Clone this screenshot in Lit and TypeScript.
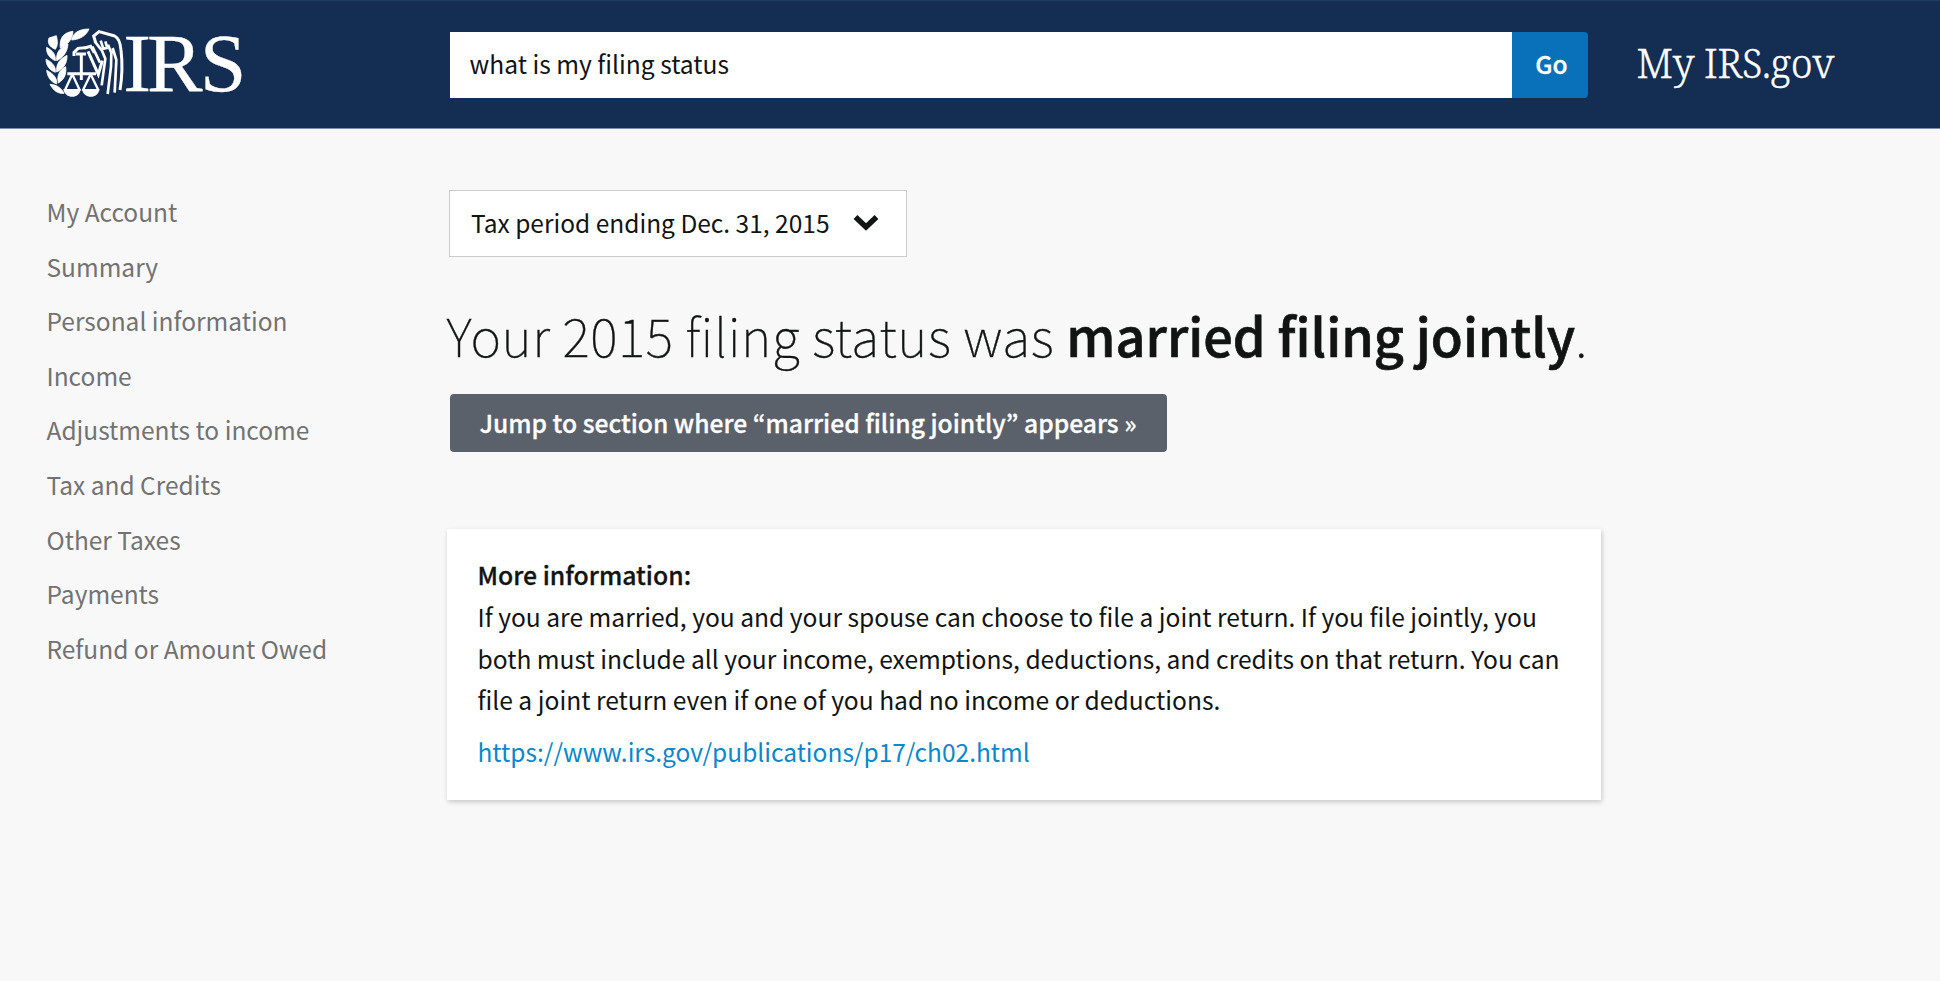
import { LitElement, html, css } from "lit";
import { customElement } from "lit/decorators.js";

const NAV = ["My Account", "Summary", "Personal information", "Income", "Adjustments to income", "Tax and Credits", "Other Taxes", "Payments", "Refund or Amount Owed"];

@customElement("irs-logo")
class IrsLogo extends LitElement {
  static styles = css`
    :host { display: block; }
    svg { display: block; width: 200px; height: 75px; overflow: visible; }
    .word { font-family: "Liberation Serif", serif; font-size: 250px; fill: #fff; stroke: #fff; stroke-width: 1; }
    .leaf { fill: #fff; }
    .laurel { fill: #fff; stroke: #fff; stroke-width: 2.5; }
    .line { fill: none; stroke: #fff; stroke-width: 9; stroke-linejoin: miter; }
    .feather { fill: none; stroke: #fff; stroke-width: 8; stroke-linejoin: bevel; }
    .thin { fill: none; stroke: #fff; stroke-width: 7; }
  `;
  render() {
    return html`<svg viewBox="12 15 600 225" role="img" aria-label="IRS">
      <g class="laurel">
        <path d="M95 60C98 40 116 27 147 27C138 48 120 58 95 60Z"/>
        <path d="M61 84C58 60 66 38 99 34C97 56 86 74 61 84Z"/>
        <path d="M46 88C26 80 22 66 27 54L49 47C53 62 54 76 46 88Z"/>
        <path d="M50 122C48 98 58 84 84 72C82 94 72 112 50 122Z"/>
        <path d="M46 122C28 114 18 100 20 82C38 92 48 104 46 122Z"/>
        <path d="M50 156C48 132 58 118 81 106C82 128 72 146 50 156Z"/>
        <path d="M46 157C28 150 18 136 18 117C38 128 48 140 46 157Z"/>
        <path d="M55 189C50 166 58 150 77 140C80 160 74 178 55 189Z"/>
        <path d="M50 192C32 186 22 170 20 151C42 162 52 176 50 192Z"/>
        <path d="M72 220C54 222 40 212 30 193C50 194 64 204 72 220Z"/>
      </g>
      <path class="line" d="M124 102V180M82 161H168"/>
      <path class="thin" d="M97 163L74 212M97 163L120 212M152 163L128 212M152 163L176 212"/>
      <path class="leaf" d="M70 207H122C120 238 74 238 70 207ZM126 207H178C176 238 130 238 126 207Z"/>
      <path class="line" d="M102 108V97L114 85L136 83M108 102H138"/>
      <path class="line" d="M134 84L152 79L163 98M144 94L175 163L187 122"/>
      <path class="feather" d="M157 80L180 128"/>
      <path class="line" d="M167 68L161 48L177 35L224 48Q240 56 243 90Q250 150 240 210"/>
      <path class="feather" d="M164 64L186 92L196 116L185 196M182 62L190 86L202 84L196 64M204 74L214 98L213 140L203 222M218 84L229 120L224 218"/>
      <text class="word" y="212"><tspan x="250">I</tspan><tspan x="321">R</tspan><tspan x="480">S</tspan></text>
    </svg>`;
  }
}

@customElement("app-root")
class AppRoot extends LitElement {
  static styles = css`
    :host { display: block; min-height: 981px; background: #f8f8f8; color: #111413; font-family: "Noto Sans CJK KR", sans-serif; font-size: 24.6px; }
    .header { box-sizing: border-box; height: 129px; background: #132e52; border-top: 1px solid #1f3d63; border-bottom: 1px solid #7f8da0; display: flex; align-items: flex-start; padding-left: 44px; }
    .header irs-logo { margin-top: 24px; width: 406px; }
    .search { display: flex; height: 66px; margin-top: 31px; width: 1138px; line-height: 63px; }
    .field { flex: 1; background: #fff; padding-left: 19.5px; }
    .go { width: 76px; background: #0971ba; color: #fff; border-radius: 0 4px 4px 0; text-align: center; font-weight: 500; -webkit-text-stroke: .3px; text-indent: 3px; }
    .brand { font-family: "Noto Serif", "Liberation Serif", serif; color: #fff; font-size: 39.5px; font-weight: 300; letter-spacing: -.4px; -webkit-text-stroke: .4px; line-height: 66px; margin: 29px 0 0 48.5px; white-space: nowrap; }
    .body { display: flex; }
    .nav { padding: 56px 0 0 46.5px; display: flex; flex-direction: column; color: #727272; font-size: 24.5px; line-height: 54.6px; box-sizing: border-box; width: 449px; }
    .main { padding-top: 61px; }
    .period { box-sizing: border-box; width: 458px; height: 67px; border: 1px solid #ccc; background: #fff; display: flex; align-items: center; padding: 0 0 2px 21px; gap: 23px; font-size: 24.5px; }
    h1 { margin: 43px 0 0 -2.5px; font-size: 52.15px; line-height: 70px; font-weight: 100; letter-spacing: .57px; -webkit-text-stroke: .4px; white-space: nowrap; }
    b { font-weight: 500; -webkit-text-stroke: .3px; }
    h1 b { letter-spacing: .03px; -webkit-text-stroke: .7px; }
    .jump { width: 717px; height: 58px; box-sizing: border-box; padding-left: 29.5px; margin: 24px 0 0 1px; line-height: 56px; background: #5b616b; color: #fff; border-radius: 4px; font-size: 24.65px; font-weight: 500; -webkit-text-stroke: .3px; white-space: nowrap; }
    .card { box-sizing: border-box; margin: 77px 0 0 -2px; width: 1154px; height: 271px; background: #fff; padding: 25px 0 0 30.5px; box-shadow: 1px 2px 5px rgba(0,0,0,.2); line-height: 41.8px; white-space: nowrap; }
    .card b { font-size: 24.75px; }
    .link { color: #0b87cb; margin-top: 10px; font-size: 24.5px; }
  `;
  render() {
    return html`
      <div class="header"><irs-logo></irs-logo>
        <div class="search"><div class="field">what is my filing status</div><div class="go">Go</div></div>
        <div class="brand">My IRS.gov</div></div>
      <div class="body">
        <div class="nav">${NAV.map((n) => html`<span>${n}</span>`)}</div>
        <div class="main">
          <div class="period"><span>Tax period ending Dec. 31, 2015</span>
            <svg width="26" height="18" viewBox="0 0 26 18"><path d="M2.5 3L13 13L23.5 3" fill="none" stroke="#111413" stroke-width="5.5"/></svg></div>
          <h1>Your 2015 filing status was <b>married filing jointly</b>.</h1>
          <div class="jump">Jump to section where “married filing jointly” appears »</div>
          <div class="card"><b>More information:</b><br>If you are married, you and your spouse can choose to file a joint return. If you file jointly, you<br>both must include all your income, exemptions, deductions, and credits on that return. You can<br>file a joint return even if one of you had no income or deductions.
            <div class="link">https://www.irs.gov/publications/p17/ch02.html</div></div>
        </div>
      </div>`;
  }
}
